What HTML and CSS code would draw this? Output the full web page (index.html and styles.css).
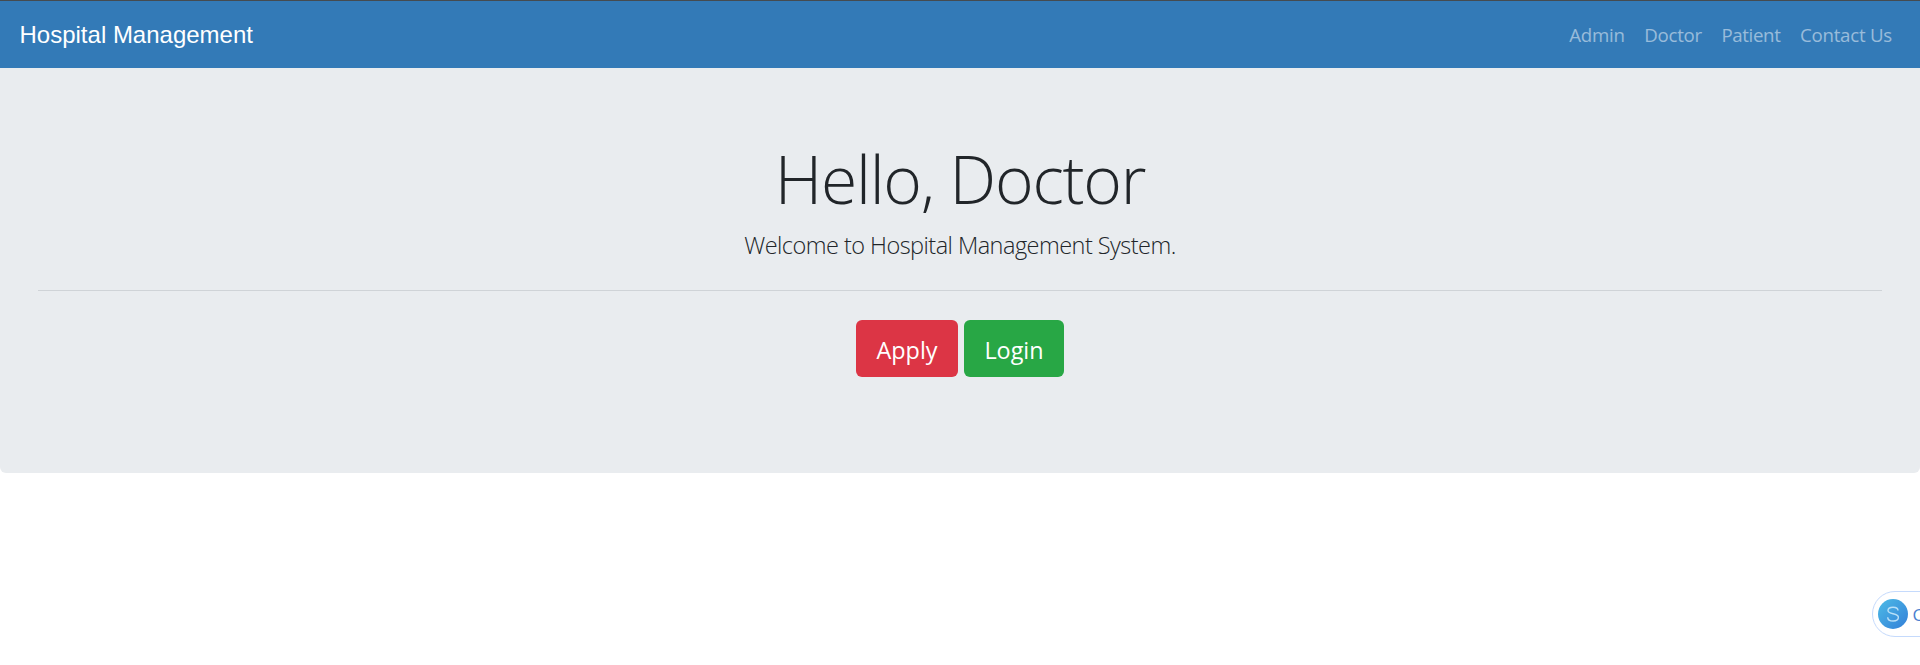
FILE: index.html
```html
<!DOCTYPE html>
<html lang="en">
<head>
<meta charset="utf-8">
<title>Hospital Management</title>
<link rel="stylesheet" href="styles.css">
</head>
<body>
<nav class="navbar">
  <a class="brand">Hospital Management</a>
  <div class="links"><a>Admin</a><a>Doctor</a><a class="patient">Patient</a><a>Contact Us</a></div>
</nav>
<main class="jumbotron">
  <h1>Hello, Doctor</h1>
  <p class="lead">Welcome to Hospital Management System.</p>
  <hr>
  <div class="actions"><a class="btn apply">Apply</a><a class="btn login">Login</a></div>
</main>
<aside class="widget">
  <svg width="30" height="30" viewBox="0 0 30 30">
    <defs><linearGradient id="g" x1="0" y1="0" x2="1" y2="1"><stop offset="0" stop-color="#4dbbe6"/><stop offset="1" stop-color="#337fd8"/></linearGradient></defs>
    <circle cx="15" cy="15" r="15" fill="url(#g)"/>
    <path d="M20 11.5C20 9.5 18 8.3 15 8.3C12 8.3 10 9.5 10 11.6C10 16 20.4 13.5 20.4 18.3C20.4 20.8 18.2 22 15.2 22C12 22 9.7 20.7 9.7 18.2" fill="none" stroke="#b9e0f8" stroke-width="1.4"/>
  </svg>
  <span>C</span>
</aside>
</body>
</html>
```
FILE: styles.css
```css
* { box-sizing: border-box; }
body { margin: 0; height: 665px; overflow: hidden; background: #fff; color: #212529; font-family: "Open Sans", "Noto Sans", sans-serif; position: relative; }
.navbar { height: 68px; border-top: 1px solid #454b50; background: #337ab7; display: flex; justify-content: space-between; align-items: center; padding: 0 28px 0 19.5px; }
.brand { font: 24px/36px "Liberation Sans", sans-serif; color: #fff; }
.links { display: flex; gap: 19.4px; font-size: 18.7px; line-height: 29px; letter-spacing: -.24px; color: rgba(255,255,255,.5); padding-bottom: 1px; }
.links a { white-space: nowrap; }
.links .patient { letter-spacing: -.36px; }
.jumbotron { height: 405px; background: #e9ecef; border-radius: 0 0 6px 6px; padding: 70px 38px 0; text-align: center; }
h1 { margin: 0; font-size: 66px; font-weight: 300; line-height: 80px; letter-spacing: -1.25px; white-space: nowrap; }
.lead { margin: 9px 0 0; font-size: 23.5px; font-weight: 300; line-height: 36px; letter-spacing: -.53px; }
hr { margin: 27px 0 0; border: 0; border-top: 1px solid #cfd3d7; }
.actions { margin-top: 29px; display: flex; justify-content: center; gap: 6px; }
.btn { height: 57px; border-radius: 6px; color: #fff; font-size: 23.4px; line-height: 61px; }
.apply { width: 102px; background: #dc3545; }
.login { width: 100px; background: #28a745; }
.widget { position: absolute; left: 1872px; top: 591px; width: 80px; height: 46px; border: 1px solid #c5dafc; border-radius: 23px; background: #fff; display: flex; align-items: center; gap: 4.5px; padding-left: 5px; }
.widget svg { flex: none; }
.widget span { font-size: 17px; font-weight: 500; color: #4a7fd0; }
```
